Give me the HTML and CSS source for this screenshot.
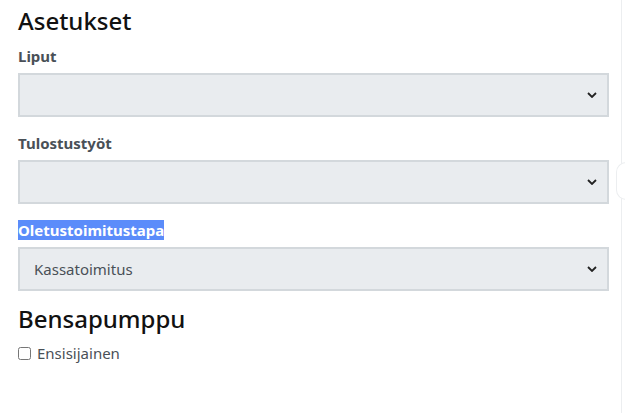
FILE: index.html
```html
<!DOCTYPE html>
<html lang="fi">
<head>
  <meta charset="UTF-8">
  <title>Asetukset</title>
  <link rel="stylesheet" href="styles.css">
</head>
<body>
  <div class="page">
    <h1>Asetukset</h1>

    <div class="field">
      <label>Liput</label>
      <div class="select-wrap">
        <select class="select"><option></option></select>
        <svg class="chevron" width="10" height="6" viewBox="0 0 10 6"><path d="M1 1l4 4 4-4" fill="none" stroke="#222" stroke-width="1.8"/></svg>
      </div>
    </div>

    <div class="field">
      <label>Tulostustyöt</label>
      <div class="select-wrap">
        <select class="select"><option></option></select>
        <svg class="chevron" width="10" height="6" viewBox="0 0 10 6"><path d="M1 1l4 4 4-4" fill="none" stroke="#222" stroke-width="1.8"/></svg>
      </div>
    </div>

    <div class="field">
      <label><span class="selected">Oletustoimitustapa</span></label>
      <div class="select-wrap">
        <select class="select"><option>Kassatoimitus</option></select>
        <svg class="chevron" width="10" height="6" viewBox="0 0 10 6"><path d="M1 1l4 4 4-4" fill="none" stroke="#222" stroke-width="1.8"/></svg>
      </div>
    </div>

    <h2>Bensapumppu</h2>
    <label class="check"><input type="checkbox"> Ensisijainen</label>
  </div>
  <div class="edge"><div class="knob"></div></div>
</body>
</html>
```

FILE: styles.css
```css
body {
  margin: 0;
  font-family: 'Noto Sans', 'Open Sans', sans-serif;
  color: #495057;
  background: #fff;
}
.page {
  width: 591px;
  padding: 4px 0 0 18px;
}
h1, h2 {
  margin: 0;
  color: #111;
  font-weight: 500;
  font-size: 24px;
  line-height: 34px;
}
.field {
  margin-top: 7px;
}
.field + .field {
  margin-top: 15px;
}
.field label {
  display: block;
  font-weight: 700;
  font-size: 15px;
  line-height: 23px;
  margin-bottom: 5px;
}
.selected {
  background: #5b8cfa;
  color: #fff;
}
.select-wrap {
  position: relative;
}
.select {
  display: block;
  width: 100%;
  height: 44px;
  padding: 0 14px;
  font-family: inherit;
  font-size: 15px;
  color: #495057;
  background: #e9ecef;
  border: 2px solid #d3d8dc;
  border-radius: 0;
  appearance: none;
  -webkit-appearance: none;
  box-sizing: border-box;
}
.chevron {
  position: absolute;
  right: 12px;
  top: 19px;
}
h2 {
  margin-top: 11px;
}
.check {
  display: flex;
  align-items: center;
  gap: 6px;
  margin-top: 6px;
  font-size: 15px;
  line-height: 22px;
}
.check input {
  margin: 0;
  width: 13px;
  height: 13px;
}
.edge {
  position: absolute;
  top: 0;
  right: 0;
  width: 3px;
  height: 413px;
  border-left: 1px solid #eceef0;
}
.knob {
  position: absolute;
  top: 162px;
  left: -6px;
  width: 14px;
  height: 36px;
  border-radius: 10px 0 0 10px;
  border: 1px solid #eceef0;
  border-right: none;
  background: #fff;
}
```
